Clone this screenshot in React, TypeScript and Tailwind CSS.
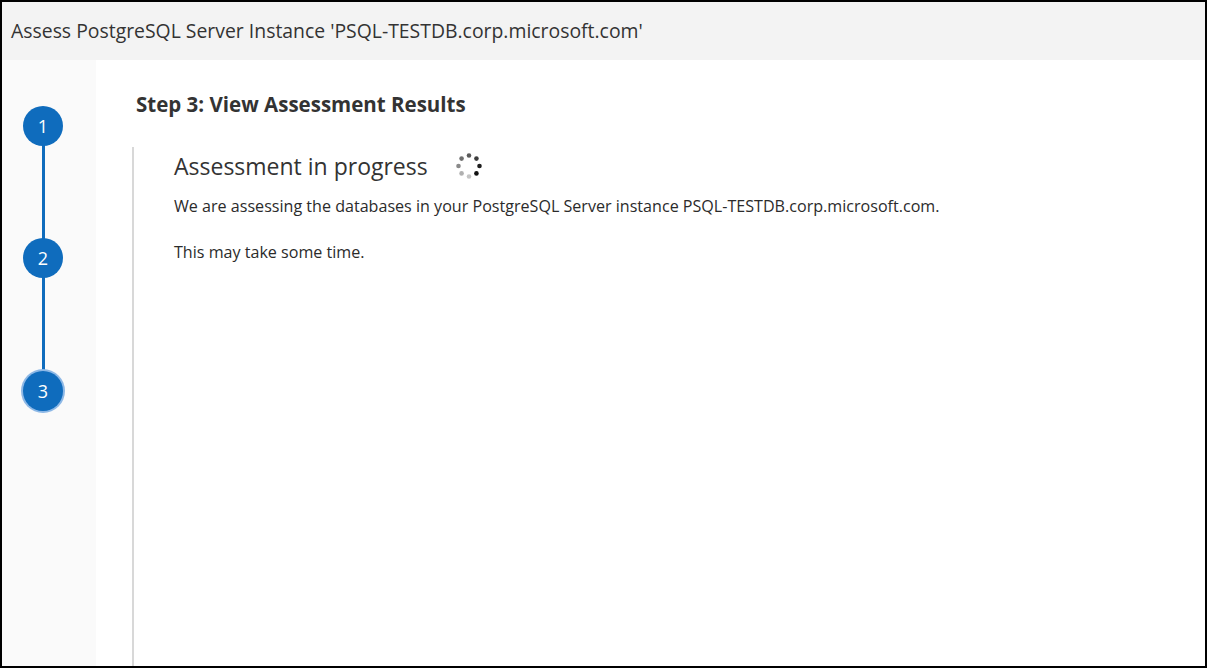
import React from "react";

const font = { fontFamily: '"Open Sans", "Noto Sans", sans-serif' };

function Spinner() {
  const dots = [
    { a: -90, c: "#5a5a5a" },
    { a: -45, c: "#3c3c3c" },
    { a: 0, c: "#1e1e1e" },
    { a: 45, c: "#111111" },
    { a: 90, c: "#c4c4c4" },
    { a: 135, c: "#b0b0b0" },
    { a: 180, c: "#8a8a8a" },
    { a: 225, c: "#6e6e6e" },
  ];
  return (
    <svg width="28" height="28" viewBox="0 0 28 28" className="ml-[27px]">
      {dots.map((d, i) => (
        <circle
          key={i}
          cx={14 + 10.5 * Math.cos((d.a * Math.PI) / 180)}
          cy={14 + 10.5 * Math.sin((d.a * Math.PI) / 180)}
          r="2.3"
          fill={d.c}
        />
      ))}
    </svg>
  );
}

function StepCircle({ n, active }: { n: number; active?: boolean }) {
  return (
    <div
      className={
        "relative z-10 flex h-[40px] w-[40px] items-center justify-center rounded-full bg-[#0f6cbd] text-[18px] text-white " +
        (active ? "ring-2 ring-[#8db8e6]" : "")
      }
    >
      {n}
    </div>
  );
}

export default function App() {
  return (
    <div className="h-[668px] w-[1207px] overflow-hidden bg-black p-[2px]" style={font}>
      <div className="flex h-full w-full flex-col bg-white">
        <div className="flex h-[58px] shrink-0 items-center bg-[#f3f3f3] pl-[9px] text-[19.4px] text-[#333]">
          Assess PostgreSQL Server Instance 'PSQL-TESTDB.corp.microsoft.com'
        </div>
        <div className="flex flex-1">
          <div className="w-[94px] shrink-0 bg-[#fafafa]">
            <div className="relative ml-[21px] mt-[46px] flex w-[40px] flex-col items-center">
              <div className="absolute left-[18.5px] top-[20px] h-[265px] w-[3px] bg-[#0f6cbd]" />
              <StepCircle n={1} />
              <div className="h-[92px]" />
              <StepCircle n={2} />
              <div className="h-[93px]" />
              <StepCircle n={3} active />
            </div>
          </div>
          <div className="flex flex-1 flex-col pl-[40px]">
            <div className="mt-[31px] text-[20.5px] font-bold leading-[26px] text-[#333]">
              Step 3: View Assessment Results
            </div>
            <div className="mt-[30px] ml-[-4px] flex-1 border-l-2 border-[#d8d8d8] pl-[40px]">
              <div className="flex items-center pt-[3px]">
                <span className="text-[23px] leading-[32px] text-[#333]">Assessment in progress</span>
                <Spinner />
              </div>
              <p className="mt-[14px] text-[16.1px] leading-[20px] text-[#2b2b2b]">
                We are assessing the databases in your PostgreSQL Server instance PSQL-TESTDB.corp.microsoft.com.
              </p>
              <p className="mt-[26px] text-[16.1px] leading-[20px] text-[#2b2b2b]">This may take some time.</p>
            </div>
          </div>
        </div>
      </div>
    </div>
  );
}
